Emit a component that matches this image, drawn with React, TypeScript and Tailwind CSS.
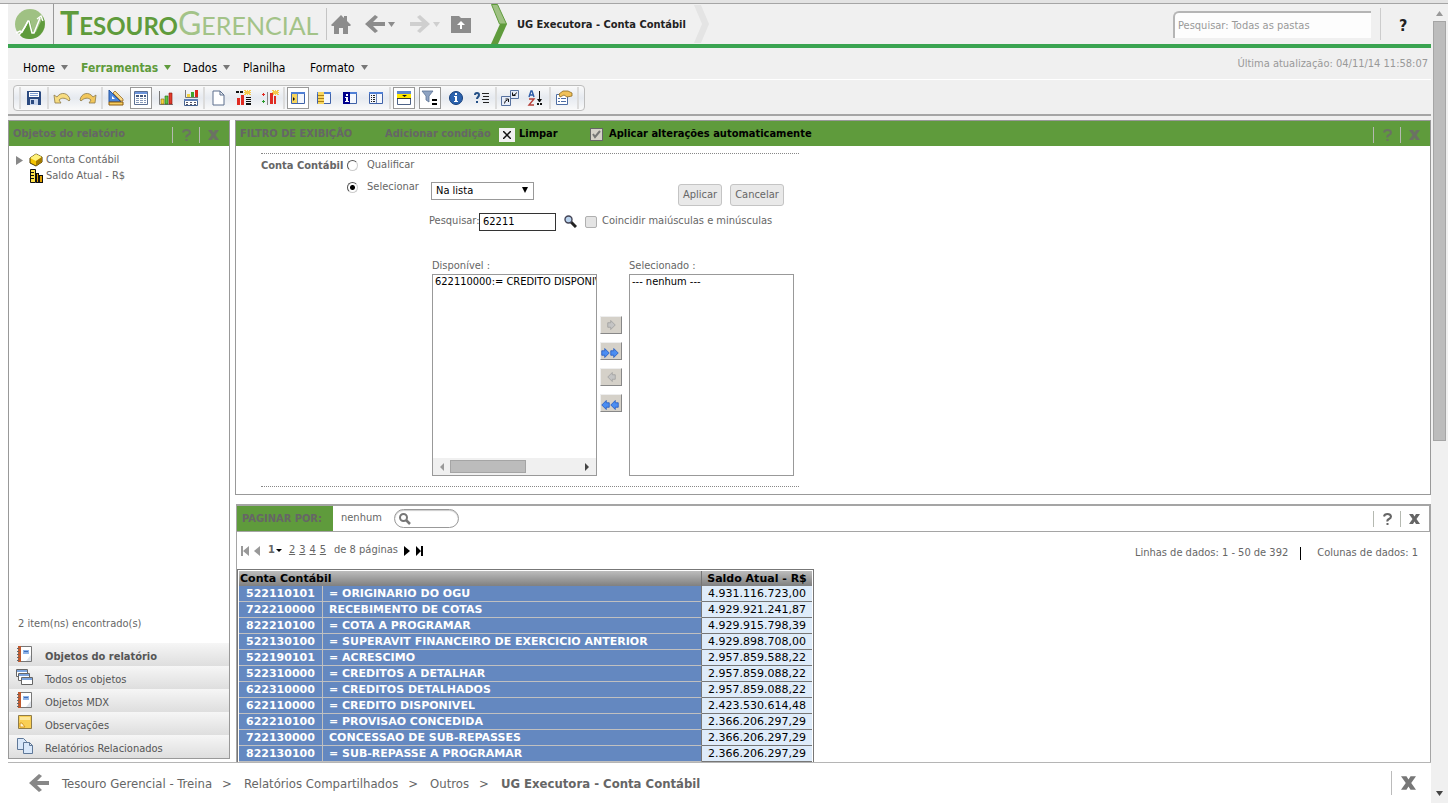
import type { ReactNode } from "react";

const SAVE = (
  <>
    <path d="M1 1h13l1 1v13H1z" fill="#2b4a80" />
    <path d="M3 2h10v5H3z" fill="#fff" />
    <path d="M4 3h8v1H4zM4 5h8v1H4z" fill="#7c9cd0" />
    <path d="M4 9h8v6H4z" fill="#c9d6ec" />
    <path d="M5 10h3v4H5z" fill="#2b4a80" />
  </>
);
const UNDO = (
  <path d="M0 5l1 8h6L5 10c3-3 7-2 10 1l1-1C15 3 7 1 3 7z" fill="#f7dc80" stroke="#8d7a4a" strokeWidth="0.8" />
);
const REDO = (
  <path d="M16 5l-1 8H9l2-3C8 7 4 8 1 11l-1-1C1 3 9 1 13 7z" fill="#f2c75c" stroke="#8d7a4a" strokeWidth="0.8" />
);
const RULER = (
  <>
    <path d="M1 0v12h12z" fill="#4b86dc" stroke="#2253a0" />
    <path d="M4 6v3h3z" fill="#fff" />
    <path d="M1 12h14v3H1z" fill="#f7cf62" stroke="#8a5a10" />
    <path d="M5 3l2-2 8 8v2h-2z" fill="#f6d88a" stroke="#8a5a10" strokeWidth="0.7" />
  </>
);
const GRID = (
  <>
    <path d="M1.5 1.5h13v13h-13z" fill="#fff" stroke="#5b6f92" />
    <path d="M2 2h12v2H2z" fill="#6d95dc" />
    <path d="M3 5h3v2H3zM7 5h3v2H7zM11 5h2v2h-2z" fill="#44597e" />
    <path d="M3 8h3v1H3zM7 8h3v1H7zM11 8h2v1h-2zM3 10h3v1H3zM7 10h3v1H7zM11 10h2v1h-2zM3 12h3v1H3zM7 12h3v1H7zM11 12h2v1h-2z" fill="#8799b8" />
  </>
);
const CHART = (
  <>
    <path d="M1.5 1v13.5H15" fill="none" stroke="#777" />
    <path d="M3 9h3v5H3z" fill="#f5d442" stroke="#8a6a00" strokeWidth="0.6" />
    <path d="M7 6h3v8H7z" fill="#5fc144" stroke="#1d6b12" strokeWidth="0.6" />
    <path d="M11 3h3v11h-3z" fill="#e03b2d" stroke="#8c1107" strokeWidth="0.6" />
  </>
);
const CHART_GRID = (
  <>
    <path d="M2.5 0v7.5H15" fill="none" stroke="#777" />
    <path d="M4 4h3v3H4z" fill="#f5d442" />
    <path d="M8 2h3v5H8z" fill="#3fa52c" />
    <path d="M12 0h3v7h-3z" fill="#d8291c" />
    <path d="M1.5 9.5h13v6h-13z" fill="#fff" stroke="#44618f" />
    <path d="M1 9h14v2H1z" fill="#5f7fb5" />
    <path d="M3 12h2v1H3zM7 12h2v1H7zM11 12h2v1h-2zM3 14h2v1H3zM7 14h2v1H7zM11 14h2v1h-2z" fill="#556" />
  </>
);
const PAGE = <path d="M3 1h7l4 4v10H3zM10 1v4h4" fill="#fff" stroke="#5d6f8d" />;
const SPARK = (
  <path d="M8 0h2v1h1V0h1v1h1V0h2v1h-1v1h1v1h-1v1h1v1h-2V4h-1v1h-1V4h-1v1H8V4h1V3H8V2h1V1H8z" fill="#f5c84a" />
);
const METRIC_COLS = (
  <>
    {SPARK}
    <path d="M0 1h3v2H0zM4 1h3v2H4z" fill="#111" />
    <path d="M1 8h3v7H1zM5 5h3v10H5z" fill="#e02b22" />
    <path d="M10 7h5v1h-5zM10 9h5v1h-5zM10 11h5v1h-5zM10 13h5v2h-5z" fill="#111" />
  </>
);
const METRIC_ROWS = (
  <>
    <g transform="translate(2 0)">{SPARK}</g>
    <path d="M0 4h1V3h1v1h1v1H2v1H1V5H0z" fill="#e02b22" />
    <path d="M0 11h1v-1h1v1h1v1H2v1H1v-1H0z" fill="#2b9a2b" />
    <path d="M5 2h1v13H5z" fill="#888" />
    <path d="M8 3h3v11H8zM12 6h2v8h-2z" fill="#e02b22" />
  </>
);
const FRAME = (
  <>
    <path d="M1.5 2.5h13v11h-13z" fill="#f4f7fd" stroke="#3f62a8" />
    <path d="M1 2h14v2H1z" fill="#4f7fd6" />
  </>
);
const PANE_LEFT = (
  <>
    {FRAME}
    <path d="M2 4h5v9H2z" fill="#f8d55c" />
    <path d="M3 7l2 2-2 2z" fill="#111" />
    <path d="M7 4h1v9H7z" fill="#6c87b8" />
  </>
);
const PANE_LIST = (
  <>
    {FRAME}
    <path d="M2 2h6v12H2z" fill="#f8d55c" />
    <path d="M2 5h6v1H2zM2 8h6v1H2zM2 11h6v1H2z" fill="#a9801b" />
  </>
);
const PANE_INFO = (
  <>
    {FRAME}
    <path d="M1 2h7v12H1z" fill="#00008c" />
    <path d="M4 4h2v2H4zM3 7h3v4h1v1H3v-1h1V8H3z" fill="#fff" />
  </>
);
const PANE_DETAIL = (
  <>
    {FRAME}
    <path d="M3 5h1v1H3zM3 7h1v1H3zM3 9h1v1H3zM3 11h1v1H3zM5 5h2v1H5zM5 7h2v1H5zM5 9h2v1H5zM5 11h2v1H5z" fill="#222" />
    <path d="M8 4h1v9H8z" fill="#6c87b8" />
  </>
);
const VIEW_FILTER = (
  <>
    <path d="M1.5 1.5h13v13h-13z" fill="#fff" stroke="#4c6186" />
    <path d="M1 1h14v3H1z" fill="#5c86cf" />
    <path d="M1 4h14v4H1z" fill="#ffe800" />
    <path d="M6 5h5L8.5 7z" fill="#111" />
    <path d="M1 8h14v1H1z" fill="#333" />
  </>
);
const FUNNEL = (
  <>
    <path d="M0 1h11L7 6v6l-3-2V6z" fill="#8ea3c2" stroke="#5c7294" strokeWidth="0.8" />
    <path d="M10 9h5v2h-5zM10 13h5v2h-5z" fill="#000" />
  </>
);
const INFO = (
  <>
    <circle cx="8" cy="8" r="6.5" fill="#2a62ae" stroke="#163f7c" />
    <path d="M7 3h2v2H7zM6 6h3v5h1v1H6v-1h1V7H6z" fill="#fff" />
  </>
);
const HELP_LIST = (
  <>
    <path d="M1 5q0-2 2-2t2 2q0 1-1 2t-1 2M3 11v2" fill="none" stroke="#234f86" strokeWidth="2" />
    <path d="M8 3h7v1H8zM9 6h6v1H9zM8 9h7v1H8zM9 12h6v1H9z" fill="#222" />
  </>
);
const SWAP = (
  <>
    <path d="M-.5 6.5h9v9h-9z" fill="#e6ecf8" stroke="#56719f" />
    <path d="M8.500.5h8v8h-8z" fill="#e6ecf8" stroke="#56719f" />
    <path d="M2.500 13.500q0-3 3-3.500M3.500 9h3v3M10.500 2.500v3h3M14.500 2.500q0 2-4 3" fill="none" stroke="#111" />
  </>
);
const SORT = (
  <>
    <path d="M1 7l2-6h1l2 6M2 5h3" fill="none" stroke="#2c5ca8" strokeWidth="1.4" />
    <path d="M1 9h5l-5 6h5" fill="none" stroke="#b5403a" strokeWidth="1.4" />
    <path d="M11 1h1v8h2l-2 3h-1L9 9h2zM9 13h2v2H9zM12 13h2v2h-2z" fill="#111" />
  </>
);
const PROPS = (
  <>
    <path d="M.5 4.500h11v10H.5z" fill="#fff" stroke="#4d6da4" />
    <path d="M2 8h2v1H2zM2 11h2v1H2zM5 8h5v1H5zM5 11h5v1H5z" fill="#4d6da4" />
    <path d="M3 4l4-3h5l4 2v3l-5 1-3-2-4 2z" fill="#f1c158" stroke="#8e6a20" strokeWidth="0.8" />
  </>
);

type Tool = { label: string; icon: ReactNode; on?: boolean };

const TOOL_GROUPS: { cell: string; tools: Tool[] }[] = [
  { cell: "w-[26px]", tools: [{ label: "Salvar", icon: SAVE }] },
  { cell: "w-[26px]", tools: [{ label: "Desfazer", icon: UNDO }, { label: "Refazer", icon: REDO }] },
  {
    cell: "w-[25px]",
    tools: [
      { label: "Design", icon: RULER },
      { label: "Grade", icon: GRID, on: true },
      { label: "Gráfico", icon: CHART },
      { label: "Grade e gráfico", icon: CHART_GRID },
    ],
  },
  {
    cell: "w-[26px]",
    tools: [
      { label: "Página", icon: PAGE },
      { label: "Inserir métrica", icon: METRIC_COLS },
      { label: "Inserir nova métrica", icon: METRIC_ROWS },
    ],
  },
  {
    cell: "w-[26px]",
    tools: [
      { label: "Objetos", icon: PANE_LEFT, on: true },
      { label: "Todos os objetos", icon: PANE_LIST },
      { label: "Observações", icon: PANE_INFO },
      { label: "Relacionados", icon: PANE_DETAIL },
    ],
  },
  {
    cell: "w-[26px]",
    tools: [
      { label: "Paginar por", icon: VIEW_FILTER, on: true },
      { label: "Filtro de exibição", icon: FUNNEL, on: true },
      { label: "Detalhes", icon: INFO },
      { label: "Prompts", icon: HELP_LIST },
    ],
  },
  { cell: "w-[26px]", tools: [{ label: "Trocar", icon: SWAP }, { label: "Classificar", icon: SORT }] },
  { cell: "w-[26px]", tools: [{ label: "Opções", icon: PROPS }] },
];

const MENU = [
  { label: "Home", width: "w-[58px]", arrow: true },
  { label: "Ferramentas", width: "w-[102px]", arrow: true, active: true },
  { label: "Dados", width: "w-[60px]", arrow: true },
  { label: "Planilha", width: "w-[67px]", arrow: false },
  { label: "Formato", width: "w-[60px]", arrow: true },
];

const ROWS = [
  ["522110101", "= ORIGINARIO DO OGU", "4.931.116.723,00"],
  ["722210000", "RECEBIMENTO DE COTAS", "4.929.921.241,87"],
  ["822210100", "= COTA A PROGRAMAR", "4.929.915.798,39"],
  ["522130100", "= SUPERAVIT FINANCEIRO DE EXERCICIO ANTERIOR", "4.929.898.708,00"],
  ["522190101", "= ACRESCIMO", "2.957.859.588,22"],
  ["522310000", "= CREDITOS A DETALHAR", "2.957.859.088,22"],
  ["622310000", "= CREDITOS DETALHADOS", "2.957.859.088,22"],
  ["622110000", "= CREDITO DISPONIVEL", "2.423.530.614,48"],
  ["622210100", "= PROVISAO CONCEDIDA", "2.366.206.297,29"],
  ["722130000", "CONCESSAO DE SUB-REPASSES", "2.366.206.297,29"],
  ["822130100", "= SUB-REPASSE A PROGRAMAR", "2.366.206.297,29"],
  ["", "", ""],
];

const NOTEBOOK = (
  <>
    <path d="M1.5.5h13v15h-13z" fill="#fff" stroke="#777" />
    <path d="M1 0h3v16H1z" fill="#c0592e" />
    <path d="M0 2h2v1H0zM0 5h2v1H0zM0 8h2v1H0zM0 11h2v1H0zM0 14h2v1H0z" fill="#666" />
    <path d="M6 4h6v4H6z" fill="#8fb4e8" />
    <path d="M7 5h4v1H7z" fill="#3f6db8" />
    <path d="M9 15l5-6v6z" fill="#dfe3ea" />
  </>
);
const WINDOWS = (
  <>
    <path d="M-.5.5h11v7h-11z" fill="#fff" stroke="#666" />
    <path d="M0 1h10v2H0z" fill="#7ba3dc" />
    <path d="M1.5 4.500h11v7h-11z" fill="#fff" stroke="#666" />
    <path d="M2 5h10v2H2z" fill="#7ba3dc" />
    <path d="M4.500 8.500h11v7h-11z" fill="#fff" stroke="#666" />
    <path d="M5 9h10v2H5z" fill="#7ba3dc" />
  </>
);
const NOTE = (
  <>
    <path d="M1.500.5h13v13h-13z" fill="#f9cf55" stroke="#8f7c4a" />
    <path d="M3 2h10v3H3z" fill="#fde79a" />
    <path d="M3 12V8h2l3 4z" fill="#fff4d0" stroke="#d99a20" />
  </>
);
const COPIES = (
  <>
    <path d="M.5.5h6l3 3v8h-9z" fill="#d9e8fa" stroke="#5f7898" />
    <path d="M6.500 4.500h6l3 3v8h-9zM12.500 4.500v3h3" fill="#d9e8fa" stroke="#5f7898" />
  </>
);

const SECTIONS = [
  { label: "Objetos do relatório", icon: NOTEBOOK, active: true },
  { label: "Todos os objetos", icon: WINDOWS },
  { label: "Objetos MDX", icon: NOTEBOOK },
  { label: "Observações", icon: NOTE },
  { label: "Relatórios Relacionados", icon: COPIES },
];

function Icon({ children, className = "size-4" }: { children: ReactNode; className?: string }) {
  return (
    <svg viewBox="0 0 16 16" className={`shrink-0 overflow-visible ${className}`} aria-hidden="true">
      {children}
    </svg>
  );
}

function Caret({ className }: { className: string }) {
  return (
    <svg viewBox="0 0 7 5" className={`h-[5px] w-[7px] shrink-0 fill-current ${className}`} aria-hidden="true">
      <path d="M0 0h7L3.500 5z" />
    </svg>
  );
}

function BackArrow({ className }: { className: string }) {
  return (
    <svg viewBox="0 0 20 18" className={`h-[18px] w-5 shrink-0 ${className}`} aria-hidden="true">
      <path d="M20 7v4H8l5 5-3 2-10-9 10-9 3 2-5 5z" fill="currentColor" />
    </svg>
  );
}

function HelpClose({ className }: { className: string }) {
  return (
    <div className={`ml-auto flex h-4 items-center ${className}`}>
      <button aria-label="Ajuda" className="flex h-4 w-[27px] items-center justify-center border-l border-[#b5b9b1]">
        <svg viewBox="0 0 9 12" className="h-3 w-[9px]" aria-hidden="true">
          <path d="M1 3.500Q1.500 1 4.500 1T8 3.500Q8 5 6 6T4.500 8.500M4.500 10v2" fill="none" stroke="currentColor" strokeWidth="2" />
        </svg>
      </button>
      <button aria-label="Fechar" className="flex h-4 w-[27px] items-center justify-center border-l border-[#b5b9b1]">
        <svg viewBox="0 0 11 10" className="h-[10px] w-[11px]" aria-hidden="true">
          <path d="M0 0h4l1.500 2.500L7 0h4L7.500 5l3.500 5H7L5.500 7.500 4 10H0l3.500-5z" fill="currentColor" />
        </svg>
      </button>
    </div>
  );
}

function Header() {
  return (
    <header className="flex h-11 shrink-0 items-center border-b-4 border-[#3aa451] bg-[#f0f0f0]">
      <a href="#inicio" aria-label="Início" className="flex h-10 w-[46px] shrink-0 items-center border-r border-[#999] pl-[7px]">
        <svg viewBox="0 0 30 30" className="size-[30px]" aria-hidden="true">
          <circle cx="15" cy="15" r="15" fill="#9fc183" />
          <path d="M8 23l5-11 2-1 3 13 3-1 7-15a15 15 0 0 1-14 22c-6 0-8-3-9-4z" fill="#5f9b3c" />
          <path d="M1 24l4-2 2 1 6-11 1 0 3 12 2 0 6-15" fill="none" stroke="#fff" strokeWidth="1.500" />
          <path d="M4 26q7-8 9-14M22 10l4-3 2 5" fill="none" stroke="#fff" strokeWidth="1.300" />
        </svg>
      </a>
      <div className="w-[272px] shrink-0 pl-[6px] font-['Lato','Open_Sans',sans-serif] text-[32px] leading-10 whitespace-nowrap">
        <span className="font-bold text-[#5f9b3c]">
          T<span className="text-[24px]">ESOURO</span>
        </span>
        <span className="text-[#a3c388]">
          G<span className="text-[25px]">ERENCIAL</span>
        </span>
      </div>
      <nav aria-label="Navegação" className="flex h-8 items-center border-l border-[#c4c4c4] text-[#8c8c8c]">
        <button aria-label="Home" className="ml-1">
          <svg viewBox="0 0 20 20" className="size-5" aria-hidden="true">
            <path d="M10 1l3 3V2h3v5l4 4-1 1h-2v8h-5v-6H8v6H3v-8H1l-1-1z" fill="currentColor" />
          </svg>
        </button>
        <button aria-label="Voltar" className="ml-[14px] flex items-center gap-[3px]">
          <BackArrow className="" />
          <Caret className="" />
        </button>
        <button aria-label="Avançar" className="ml-[15px] flex items-center gap-[3px] text-[#cfcfcf]">
          <BackArrow className="rotate-180" />
          <Caret className="" />
        </button>
        <button aria-label="Subir pasta" className="ml-[11px]">
          <svg viewBox="0 0 20 18" className="h-[18px] w-5" aria-hidden="true">
            <path d="M0 1h8l2 2h10v15H0z" fill="currentColor" />
            <path d="M10 6l4 4h-3v4H9v-4H6z" fill="#fff" />
          </svg>
        </button>
      </nav>
      <svg viewBox="0 0 16 40" className="ml-5 h-10 w-4 shrink-0" aria-hidden="true">
        <path d="M.5.5h6l9 19.500h-7z" fill="#9fc183" stroke="#5f9b3c" />
        <path d="M9 20h7L7 40H0z" fill="#5f9b3c" />
      </svg>
      <h1 className="ml-[10px] pt-[2px] text-[11px] font-bold whitespace-nowrap text-[#222]">UG Executora - Conta Contábil</h1>
      <svg viewBox="0 0 16 40" className="ml-2 h-10 w-4 shrink-0" aria-hidden="true">
        <path d="M0 1h7l8 19-8 19H0l8-19z" fill="#e4e4e4" />
      </svg>
      <input
        type="text"
        aria-label="Pesquisar"
        placeholder="Pesquisar: Todas as pastas"
        className="ml-auto h-[27px] w-[198px] rounded-tl-md border-t-2 border-l-2 border-[#b5b5b5] bg-[#fdfdfd] px-[3px] text-[11px] outline-none placeholder:text-[#999]"
      />
      <div className="ml-[9px] flex h-8 w-[51px] items-center border-l border-[#ccc] pt-[3px] pl-[18px]">
        <button aria-label="Ajuda" className="text-base font-bold text-[#222]">?</button>
      </div>
    </header>
  );
}

function MenuBar() {
  return (
    <div className="flex h-8 shrink-0 items-center border-b border-white bg-[#f0f0f0] pl-[15px]">
      <nav aria-label="Menu" className="flex items-center pt-2">
        {MENU.map((m) => (
          <button
            key={m.label}
            className={`flex shrink-0 items-center gap-[6px] text-xs whitespace-nowrap ${m.width} ${
              m.active ? "font-bold text-[#5f9b3c]" : "text-black"
            }`}
          >
            {m.label}
            {m.arrow && <Caret className={m.active ? "" : "text-[#777]"} />}
          </button>
        ))}
      </nav>
      <p className="ml-auto pt-[2px] pr-[3px] text-[11px] text-[#999]">Última atualização: 04/11/14 11:58:07</p>
    </div>
  );
}

function Toolbar() {
  return (
    <div className="h-9 shrink-0 border-b-2 border-[#a5a5a5] bg-[#f0f0f0] pt-[5px] pl-[5px]">
      <div
        role="toolbar"
        aria-label="Ferramentas"
        className="flex h-[26px] w-fit items-center rounded border border-[#bdbdbd] bg-linear-to-b from-[#fafafa] via-[#e6eaf0] to-[#fafafa] px-[5px]"
      >
        {TOOL_GROUPS.map((g, i) => (
          <div key={i} className="flex h-[22px] border-l-2 border-[#dcdcdc]">
            {g.tools.map((t) => (
              <span key={t.label} className={`flex justify-center ${g.cell}`}>
                <button
                  aria-label={t.label}
                  className={`flex h-[22px] w-[22px] items-center justify-center ${t.on ? "border border-[#999] bg-white" : ""}`}
                >
                  <Icon>{t.icon}</Icon>
                </button>
              </span>
            ))}
          </div>
        ))}
        <div className="h-[22px] border-l-2 border-[#dcdcdc]" />
      </div>
    </div>
  );
}

function ObjectsPanel() {
  return (
    <aside className="mb-[3px] flex w-[222px] shrink-0 flex-col border border-[#999] bg-white">
      <div className="flex h-[25px] shrink-0 items-center bg-[#5f9b3c] pt-[2px] pl-1">
        <h2 className="text-[11px] font-bold text-[#666]">Objetos do relatório</h2>
        <HelpClose className="pr-[3px] text-[#6b7263]" />
      </div>
      <ul className="flex-1 pt-[6px] text-[11px] leading-4 text-[#666]">
        <li className="flex items-center pl-[7px]">
          <svg viewBox="0 0 7 9" className="h-[9px] w-[7px] shrink-0" aria-hidden="true">
            <path d="M0 0l7 4.500-7 4.500z" fill="#888" />
          </svg>
          <svg viewBox="0 0 14 14" className="mr-[3px] ml-[6px] size-[14px]" aria-hidden="true">
            <path d="M1 5l6-4 6 3v5l-6 4-6-3z" fill="#f5c400" stroke="#4a3800" />
            <path d="M1 5l6-4 6 3-6 4z" fill="#fff27a" />
            <path d="M7 8l6-4v5l-6 4z" fill="#a37a00" />
          </svg>
          Conta Contábil
        </li>
        <li className="flex items-center pl-5">
          <svg viewBox="0 0 14 14" className="mr-[3px] size-[14px]" aria-hidden="true">
            <path d="M1.500.5h5v13h-5z" fill="#ffe24a" stroke="#111" />
            <path d="M2 3h3v1H2zM2 6h3v1H2zM2 9h3v1H2z" fill="#111" />
            <path d="M7 4h3v10H7zM10 6h4v8h-4z" fill="#111" />
            <path d="M8 5h1v8H8zM11 7h2v6h-2z" fill="#e0a000" />
          </svg>
          Saldo Atual - R$
        </li>
      </ul>
      <p className="pb-[11px] pl-[9px] text-[11px] leading-4 text-[#666]">2 item(ns) encontrado(s)</p>
      <nav aria-label="Seções">
        {SECTIONS.map((s) => (
          <button
            key={s.label}
            className={`flex h-[23px] w-full items-start bg-linear-to-b from-[#f6f6f6] to-[#dedede] pt-[3px] pl-2 text-left text-[11px] leading-4 text-[#555] ${
              s.active ? "font-bold" : ""
            }`}
          >
            <Icon className="mr-3 size-4">{s.icon}</Icon>
            <span className="pt-[3px]">{s.label}</span>
          </button>
        ))}
      </nav>
    </aside>
  );
}

const ARROW_R = "M1 4h4V1l6 6-6 6v-3H1z";
const ARROW_L = "M11 4H7V1L1 7l6 6v-3h4z";

function MoveButton({ label, path, double }: { label: string; path: string; double?: boolean }) {
  return (
    <button
      type="button"
      aria-label={label}
      className={`flex h-[18px] w-[22px] items-center border border-t-[#eee] border-r-[#888] border-b-[#888] border-l-[#eee] bg-[#d5d1c9] ${
        double ? "pt-1" : "justify-center"
      }`}
    >
      {(double ? [0, 1] : [0]).map((n) => (
        <svg key={n} viewBox="0 0 12 14" className="h-3 w-[9px]" aria-hidden="true">
          <path d={path} fill={double ? "#4a8df2" : "#c4c4c4"} stroke={double ? "#1c54bd" : "#9c9c9c"} />
        </svg>
      ))}
    </button>
  );
}

const RADIO =
  "size-[11px] shrink-0 appearance-none rounded-full border border-[#555] border-r-[#ccc] border-b-[#ccc] bg-white checked:bg-[radial-gradient(#000_2px,#fff_3px)]";

function FilterPanel() {
  return (
    <section className="shrink-0 border border-[#999] bg-white">
      <div className="flex h-[25px] items-center bg-[#5f9b3c] pt-[2px] pl-1 text-[11px] font-bold whitespace-nowrap">
        <h2 className="w-[145px] text-[#666]">FILTRO DE EXIBIÇÃO</h2>
        <button className="w-[114px] text-left font-bold text-[#666]">Adicionar condição</button>
        <button className="flex w-[91px] items-center gap-1 font-bold text-black">
          <span className="flex h-[14px] w-4 items-center justify-center bg-[#f0f0f0]">
            <svg viewBox="0 0 8 8" className="size-2" aria-hidden="true">
              <path d="M0 0l8 8M8 0L0 8" stroke="#111" strokeWidth="1.500" />
            </svg>
          </span>
          Limpar
        </button>
        <label className="flex items-center gap-[6px] text-black">
          <span className="relative flex">
            <input type="checkbox" defaultChecked className="peer size-[13px] appearance-none border border-[#666] bg-[#d5d1c9]" />
            <svg viewBox="0 0 9 9" className="pointer-events-none absolute top-[2px] left-[2px] hidden size-[9px] peer-checked:block" aria-hidden="true">
              <path d="M1 4l2 3 5-6" fill="none" stroke="#777" strokeWidth="2" />
            </svg>
          </span>
          Aplicar alterações automaticamente
        </label>
        <HelpClose className="pr-[3px] text-[#6b7263]" />
      </div>
      <form className="mt-[7px] mb-[7px] ml-[25px] flex h-[334px] max-w-[538px] border-y border-dotted border-[#888] text-[11px] text-[#666]">
        <div className="flex w-[168px] shrink-0 pt-[3px]">
          <span className="w-[86px] pt-px font-bold">Conta Contábil</span>
          <div className="flex flex-col gap-[6px] leading-4">
            <label className="flex items-center gap-[9px]">
              <input type="radio" name="modo" className={RADIO} />
              Qualificar
            </label>
            <label className="flex items-center gap-[9px]">
              <input type="radio" name="modo" defaultChecked className={RADIO} />
              Selecionar
            </label>
          </div>
        </div>
        <div className="flex flex-col">
          <div className="flex pt-7 pl-[2px]">
            <span className="relative flex">
              <select aria-label="Condição" className="h-[18px] w-[103px] appearance-none rounded-none border border-[#999] bg-white pl-1 text-[11px] leading-4 text-black">
                <option>Na lista</option>
              </select>
              <svg viewBox="0 0 6 6" className="pointer-events-none absolute top-[5px] right-[6px] size-[6px]" aria-hidden="true">
                <path d="M0 0h6L3 6z" />
              </svg>
            </span>
            <button type="button" className="mt-[2px] ml-36 h-[22px] w-11 rounded-[3px] border border-[#c4c4c4] bg-[#e9e9e9]">
              Aplicar
            </button>
            <button type="button" className="mt-[2px] ml-2 h-[22px] w-[54px] rounded-[3px] border border-[#c4c4c4] bg-[#e9e9e9]">
              Cancelar
            </button>
          </div>
          <div className="flex h-4 items-center pt-[15px]">
            <label htmlFor="pesquisa" className="w-[50px] whitespace-nowrap">Pesquisar:</label>
            <input id="pesquisa" type="text" defaultValue="62211" className="h-[18px] w-[77px] border border-[#333] bg-white px-[3px] text-[11px] text-black outline-none" />
            <button type="button" aria-label="Pesquisar" className="mx-2">
              <svg viewBox="0 0 13 13" className="size-[13px]" aria-hidden="true">
                <path d="M7 7l5 5" stroke="#222" strokeWidth="3" />
                <circle cx="4.500" cy="4.500" r="3.500" fill="#b9d3ee" stroke="#445" strokeWidth="1.400" />
              </svg>
            </button>
            <label className="flex items-center gap-[5px] whitespace-nowrap">
              <input type="checkbox" className="size-3 appearance-none rounded-[2px] border border-[#b0b0b0] bg-[#e4e4e4]" />
              Coincidir maiúsculas e minúsculas
            </label>
          </div>
          <div className="flex pt-9 pl-[3px]">
            <div className="flex w-[165px] flex-col">
              <label htmlFor="disponivel" className="leading-4">Disponível :</label>
              <div className="flex h-[202px] flex-col border border-[#999]">
                <select id="disponivel" multiple className="min-h-0 w-full flex-1 overflow-hidden text-[11px] text-black outline-none">
                  <option className="overflow-hidden px-[2px] py-0 leading-4">622110000:= CREDITO DISPONIVEL</option>
                </select>
                <div className="flex h-[17px] items-center bg-[#f0f0f0] px-[7px]">
                  <svg viewBox="0 0 4 8" className="h-2 w-1" aria-hidden="true">
                    <path d="M4 0v8L0 4z" fill="#999" />
                  </svg>
                  <div className="ml-[6px] h-[13px] w-[76px] border border-[#a5a5a5] bg-[#bcbcbc]" />
                  <svg viewBox="0 0 4 8" className="ml-auto h-2 w-1" aria-hidden="true">
                    <path d="M0 0v8l4-4z" fill="#444" />
                  </svg>
                </div>
              </div>
            </div>
            <div className="flex w-8 flex-col items-start gap-2 pt-[58px] pl-[3px]">
              <MoveButton label="Adicionar" path={ARROW_R} />
              <MoveButton label="Adicionar todos" path={ARROW_R} double />
              <MoveButton label="Remover" path={ARROW_L} />
              <MoveButton label="Remover todos" path={ARROW_L} double />
            </div>
            <div className="flex w-[165px] flex-col">
              <label htmlFor="selecionado" className="leading-4">Selecionado :</label>
              <select id="selecionado" multiple className="h-[202px] overflow-hidden border border-[#999] text-[11px] text-black outline-none">
                <option className="px-[2px] py-0 leading-4">--- nenhum ---</option>
              </select>
            </div>
          </div>
        </div>
      </form>
    </section>
  );
}

function PageIcon({ label, d, className }: { label: string; d: string; className: string }) {
  return (
    <button aria-label={label} className={className}>
      <svg viewBox="0 0 8 10" className="h-[10px] w-2 fill-current" aria-hidden="true">
        <path d={d} />
      </svg>
    </button>
  );
}

function ReportGrid() {
  return (
    <section className="mt-[9px] ml-px flex min-h-0 flex-1 flex-col overflow-hidden border border-b-0 border-[#a5a5a5] bg-white">
      <div className="flex h-[27px] shrink-0 items-center border-y border-r border-[#a5a5a5] text-[11px] text-[#666]">
        <h2 className="flex h-full w-24 items-center bg-[#5f9b3c] pt-[2px] pl-[5px] font-bold">PAGINAR POR:</h2>
        <span className="w-[61px] pl-2">nenhum</span>
        <span className="relative flex">
          <input type="search" aria-label="Pesquisar" className="h-[19px] w-[65px] appearance-none rounded-full border border-[#999] bg-white pl-5 shadow-[inset_0_1px_1px_#ccc] outline-none" />
          <svg viewBox="0 0 12 12" className="pointer-events-none absolute top-[4px] left-[5px] size-3" aria-hidden="true">
            <circle cx="4.500" cy="4.500" r="3.500" fill="none" stroke="#777" strokeWidth="2" />
            <path d="M7 7l4 4" stroke="#777" strokeWidth="2.500" />
          </svg>
        </span>
        <HelpClose className="pr-[2px] text-[#666]" />
      </div>
      <div className="flex h-[37px] shrink-0 items-center pl-1 text-[11px] text-[#666]">
        <PageIcon label="Primeira" d="M0 0h2v10H0zM8 0v10L2 5z" className="text-[#999]" />
        <PageIcon label="Anterior" d="M7 0v10L1 5z" className="ml-1 text-[#999]" />
        <button className="ml-[7px] flex items-center gap-px font-bold">
          1
          <svg viewBox="0 0 6 3" className="h-[3px] w-[6px]" aria-hidden="true">
            <path d="M0 0h6L3 3z" />
          </svg>
        </button>
        <span className="ml-[7px] flex gap-1">
          {[2, 3, 4, 5].map((n) => (
            <a key={n} href={`#pagina-${n}`} className="underline">{n}</a>
          ))}
        </span>
        <span className="ml-2">de 8 páginas</span>
        <PageIcon label="Próxima" d="M1 0v10l6-5z" className="ml-[5px] text-black" />
        <PageIcon label="Última" d="M1 0v10l5-5zM6 0h2v10H6z" className="ml-[4px] text-black" />
        <span className="ml-auto flex items-center pt-[6px] pr-3">
          Linhas de dados: 1 - 50 de 392
          <span className="mr-4 ml-3 h-[13px] w-px bg-black" />
          Colunas de dados: 1
        </span>
      </div>
      <table className="w-[577px] shrink-0 border-separate border-spacing-0 border border-[#777] p-px font-['DejaVu_Sans',Verdana,sans-serif] text-[11px] leading-[15px]">
        <thead>
          <tr className="bg-linear-to-b from-[#bdbdbd] to-[#808080] text-black">
            <th colSpan={2} className="border-r border-[#777] p-0 pl-px text-left">Conta Contábil</th>
            <th className="p-0 text-center">Saldo Atual - R$</th>
          </tr>
        </thead>
        <tbody>
          {ROWS.map(([code, name, value]) => (
            <tr key={code} className="h-4">
              <th scope="row" className="w-[84px] border-r border-b border-[#c0c0c0] bg-[#6488c0] p-0 pl-[7px] text-left text-white">{code}</th>
              <td className="border-r border-b border-r-[#777] border-b-[#c0c0c0] bg-[#6488c0] p-0 pl-[6px] font-bold text-white">{name}</td>
              <td className="w-[110px] border-b border-[#777] bg-[#dfecfa] p-0 pr-[6px] text-right text-black">{value}</td>
            </tr>
          ))}
        </tbody>
      </table>
    </section>
  );
}

const CRUMBS = ["Tesouro Gerencial - Treina", "Relatórios Compartilhados", "Outros"];

function Footer() {
  return (
    <footer className="flex h-[41px] shrink-0 items-center border-t border-[#b5b5b5] bg-white pl-[21px] text-[13px] text-[#666]">
      <button aria-label="Voltar" className="text-[#888]">
        <BackArrow className="" />
      </button>
      <nav aria-label="Caminho" className="ml-[13px] flex pt-[2px] whitespace-nowrap">
        {CRUMBS.map((c) => (
          <span key={c} className="flex">
            <a href="#pasta">{c}</a>
            <span className="mr-3 ml-[10px]">&gt;</span>
          </span>
        ))}
        <span className="font-bold">UG Executora - Conta Contábil</span>
      </nav>
      <button aria-label="Fechar" className="ml-auto flex h-6 w-10 items-center border-l border-[#bbb] pl-[9px] text-[#777]">
        <svg viewBox="0 0 11 10" className="h-[14px] w-[15px]" aria-hidden="true">
          <path d="M0 0h4l1.500 2.500L7 0h4L7.500 5l3.500 5H7L5.500 7.500 4 10H0l3.500-5z" fill="currentColor" />
        </svg>
      </button>
    </footer>
  );
}

export default function App() {
  return (
    <div className="flex h-screen flex-col bg-white pr-[7px] pb-[7px] font-['DejaVu_Sans_Condensed','Noto_Sans',sans-serif]">
      <div className="h-1 shrink-0 border-b border-[#a5a5a5] bg-[#e3e3e3]" />
      <div className="flex min-h-0 flex-1">
        <div className="flex min-w-0 flex-1 flex-col pl-2">
          <Header />
          <MenuBar />
          <Toolbar />
          <div className="h-1 shrink-0 bg-[#f0f0f0]" />
          <main className="flex min-h-0 flex-1 gap-[5px]">
            <ObjectsPanel />
            <div className="flex min-w-0 flex-1 flex-col">
              <FilterPanel />
              <ReportGrid />
            </div>
          </main>
          <Footer />
        </div>
        <div className="flex w-[17px] shrink-0 flex-col items-center bg-[#f0f0f0] pt-[7px] pb-[7px]">
          <Caret className="mb-[5px] rotate-180 text-[#999]" />
          <div className="h-[420px] w-[13px] border border-[#a5a5a5] bg-[#bcbcbc]" />
          <Caret className="mt-auto text-[#444]" />
        </div>
      </div>
    </div>
  );
}
